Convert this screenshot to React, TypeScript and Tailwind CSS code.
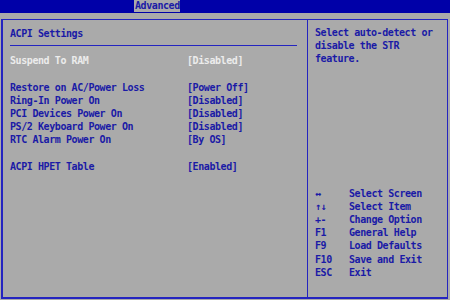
import React from 'react';

const rows: [string, string][] = [
  ['Suspend To RAM', '[Disabled]'],
  ['', ''],
  ['Restore on AC/Power Loss', '[Power Off]'],
  ['Ring-In Power On', '[Disabled]'],
  ['PCI Devices Power On', '[Disabled]'],
  ['PS/2 Keyboard Power On', '[Disabled]'],
  ['RTC Alarm Power On', '[By OS]'],
  ['', ''],
  ['ACPI HPET Table', '[Enabled]'],
];

const keys: [string, string][] = [
  ['↔', 'Select Screen'],
  ['↑↓', 'Select Item'],
  ['+-', 'Change Option'],
  ['F1', 'General Help'],
  ['F9', 'Load Defaults'],
  ['F10', 'Save and Exit'],
  ['ESC', 'Exit'],
];

export default function App() {
  return (
    <div
      className="w-[450px] h-[300px] bg-[#aaaaaa] overflow-hidden flex flex-col text-[10px] font-bold leading-[13.2px] tracking-[-0.42px] text-[#1a1aa6]"
      style={{ fontFamily: '"DejaVu Sans Mono", "Liberation Mono", monospace' }}
    >
      {/* top menu bar */}
      <div className="h-[13px] bg-[#0000a8] flex">
        <div className="ml-[134px] w-[46px] h-[12px] bg-[#aaaaaa] pl-[1px] leading-[12px]">Advanced</div>
      </div>

      {/* main frame */}
      <div className="mt-[6px] ml-[1px] mr-[2px] h-[280px] border-t border-r border-l-2 border-b-2 border-[#2424c0] flex">
        {/* left panel */}
        <div className="w-[305px] border-r border-[#2424c0] pt-[7px] pl-[7px] pr-[10px] flex flex-col">
          <div>ACPI Settings</div>
          <div className="mt-[5px] h-px bg-[#2424c0]" />
          <div className="mt-[8px] flex flex-col">
            {rows.map(([label, value], i) => (
              <div key={i} className={`flex h-[13.2px] ${i === 0 ? 'text-[#ececec]' : ''}`}>
                <span className="w-[177px]">{label}</span>
                <span>{value}</span>
              </div>
            ))}
          </div>
        </div>

        {/* right help panel */}
        <div className="flex-1 pt-[6px] pl-[7px] pb-[18px] flex flex-col">
          <div>Select auto-detect or</div>
          <div>disable the STR</div>
          <div>feature.</div>
          <div className="mt-auto flex flex-col">
            {keys.map(([k, d]) => (
              <div key={k} className="flex h-[13.2px]">
                <span className="w-[34px]">{k}</span>
                <span>{d}</span>
              </div>
            ))}
          </div>
        </div>
      </div>
    </div>
  );
}
